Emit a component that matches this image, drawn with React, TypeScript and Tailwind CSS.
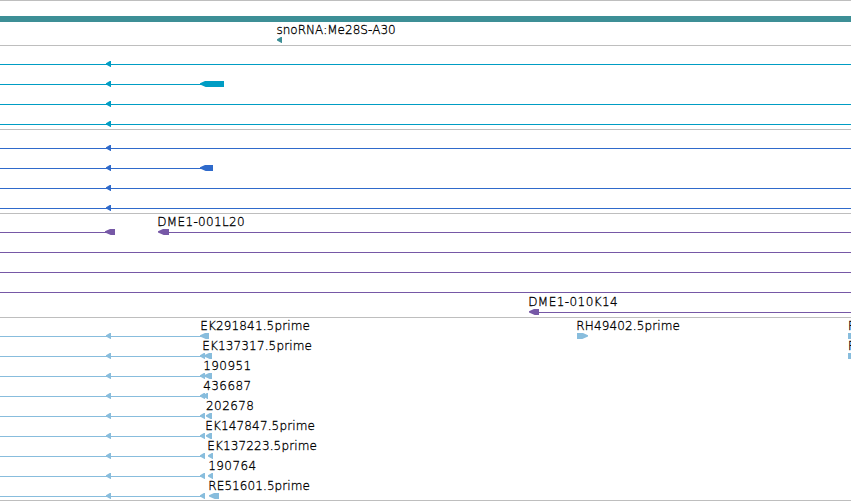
import React from 'react';

interface Feature {
  x: number;
  w: number;
  dir?: 'left' | 'right';
}

interface Row {
  lines?: [number, number][];
  features?: Feature[];
  labels?: { x: number; text: string; w: number }[];
}

interface TrackProps {
  color: string;
  rows: Row[];
}

const full: [number, number] = [0, 851];

// short features are a bare arrowhead, longer ones get a body behind a slimmer tip
const shape = ({ x, w, dir = 'left' }: Feature) => {
  const end = x + w;
  const head = w > 6 ? 5 : 3.8;
  return dir === 'left'
    ? `M${x} 17.2L${x + head} 15H${end}V21H${x + head + 0.7}L${x} 18.4Z`
    : `M${end} 17.2L${end - head} 15H${x}V21H${end - head - 0.7}L${end} 18.4Z`;
};

const TrackRow: React.FC<{ row: Row }> = ({ row }) => (
  <svg className="block h-5 w-[851px] shrink-0 overflow-visible" fill="currentColor">
    {row.lines?.map(([from, to]) => (
      <rect key={from} x={from} y={18} width={to - from} height={1} shapeRendering="crispEdges" />
    ))}
    {row.features?.map(f => <path key={f.x} d={shape(f)} />)}
    {row.labels?.map(l => (
      <text key={l.x} x={l.x} y={12} textLength={l.w} className="fill-black stroke-black stroke-[0.3]">{l.text}</text>
    ))}
  </svg>
);

const Track: React.FC<TrackProps> = ({ color, rows }) => (
  <section className={`flex flex-col border-t border-[#bebebe] pb-[3px] last:pb-0.5 last:border-b ${color}`}>
    {rows.map((row, i) => <TrackRow key={i} row={row} />)}
  </section>
);

const transcript: Row = { lines: [full], features: [{ x: 106, w: 5 }] };

const cyanRows: Row[] = [
  transcript,
  { lines: [[0, 201]], features: [{ x: 106, w: 5 }, { x: 200, w: 24 }] },
  transcript,
  transcript,
];

const blueRows: Row[] = [
  transcript,
  { lines: [[0, 201]], features: [{ x: 106, w: 5 }, { x: 200, w: 13 }] },
  transcript,
  transcript,
];

const cloneRows: Row[] = [
  {
    lines: [[0, 106], [160, 851]],
    features: [{ x: 105, w: 10 }, { x: 158, w: 11 }],
    labels: [{ x: 157.2, text: 'DME1-001L20', w: 87.5 }],
  },
  { lines: [full] },
  { lines: [full] },
  { lines: [full] },
  {
    lines: [[531, 851]],
    features: [{ x: 529, w: 10 }],
    labels: [{ x: 528.2, text: 'DME1-010K14', w: 89.5 }],
  },
];

const est = (x: number, text: string, w: number, ends: Feature[]): Row => ({
  lines: [[0, 201]],
  features: [{ x: 106, w: 5 }, ...ends],
  labels: [{ x, text, w }],
});

const estRows: Row[] = [
  est(200.3, 'EK291841.5prime', 109.6, [{ x: 200, w: 9 }]),
  est(202.3, 'EK137317.5prime', 109.6, [{ x: 200, w: 5 }, { x: 204, w: 8 }]),
  est(203.2, '190951', 48, [{ x: 200, w: 5 }, { x: 204, w: 8 }]),
  est(203.2, '436687', 48, [{ x: 200, w: 5 }, { x: 203, w: 5 }]),
  est(206, '202678', 48, [{ x: 200, w: 5 }, { x: 206, w: 6 }]),
  est(205.3, 'EK147847.5prime', 109.6, [{ x: 200, w: 5 }, { x: 206, w: 6 }]),
  est(207.3, 'EK137223.5prime', 109.6, [{ x: 200, w: 5 }, { x: 208, w: 5 }]),
  est(208.2, '190764', 48, [{ x: 200, w: 5 }, { x: 208, w: 5 }]),
  est(208.3, 'RE51601.5prime', 101.6, [{ x: 200, w: 5 }, { x: 209, w: 10 }]),
];

estRows[0].features?.push({ x: 577, w: 11, dir: 'right' }, { x: 848, w: 12, dir: 'right' });
estRows[0].labels?.push({ x: 576.3, text: 'RH49402.5prime', w: 103.6 }, { x: 848, text: 'F', w: 7 });
estRows[1].features?.push({ x: 848, w: 12, dir: 'right' });
estRows[1].labels?.push({ x: 848, text: 'F', w: 7 });

const App: React.FC = () => (
  <main className="flex h-[501px] w-[851px] flex-col overflow-hidden bg-white font-['DejaVu_Sans',sans-serif] text-[12px] font-extralight">
    <section className="flex flex-col border-t border-[#bebebe] pb-[3px] text-[#3d8f96]">
      <div className="mt-[15px] h-1.5 bg-[#3d8f96]" />
      <TrackRow
        row={{ features: [{ x: 277, w: 5 }], labels: [{ x: 276.4, text: 'snoRNA:Me28S-A30', w: 119.3 }] }}
      />
    </section>
    <Track color="text-[#009dc4]" rows={cyanRows} />
    <Track color="text-[#2f6acb]" rows={blueRows} />
    <Track color="text-[#7658a6]" rows={cloneRows} />
    <Track color="text-[#88bddd]" rows={estRows} />
  </main>
);

export default App;
